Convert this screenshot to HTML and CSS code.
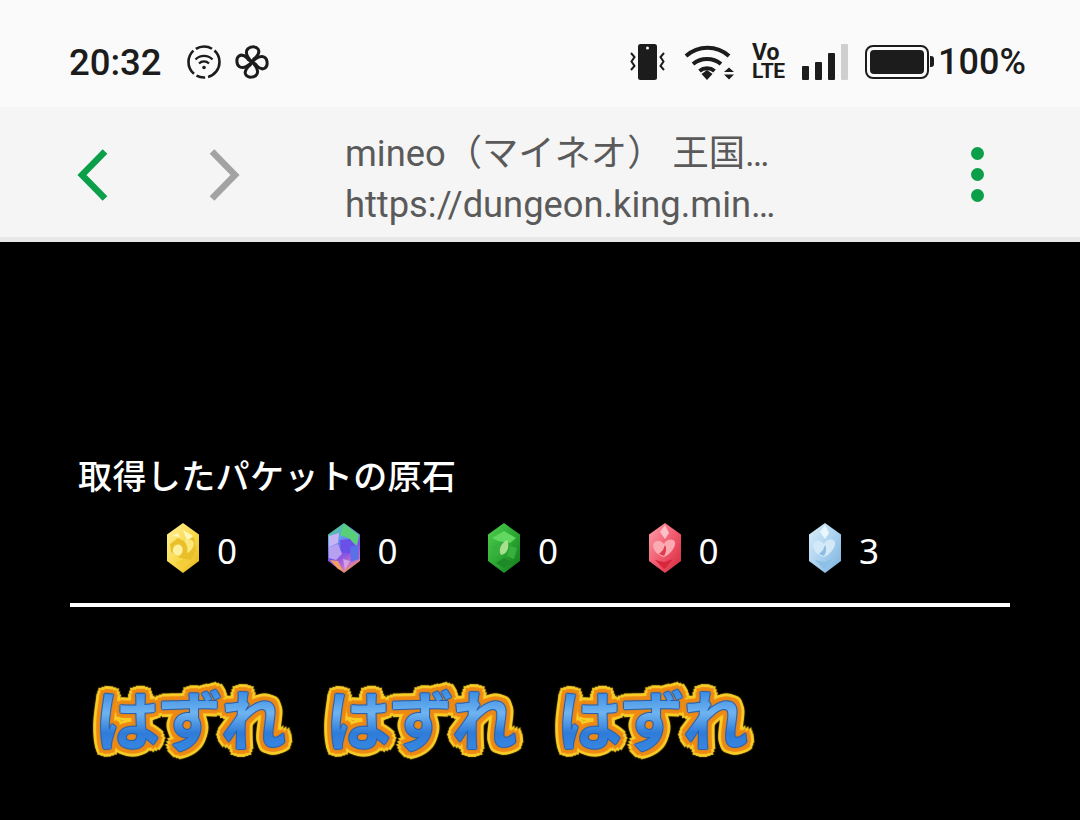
FILE: index.html
```html
<!DOCTYPE html>
<html lang="ja">
<head>
	<meta charset="utf-8">
	<title>mineo</title>
	<link rel="stylesheet" href="styles.css">
</head>
<body>
	<svg class="defs" width="0" height="0">
		<defs>
			<filter id="soft"><feGaussianBlur stdDeviation="0.6"/></filter>
			<linearGradient id="gY" x1="0" y1="0" x2="1" y2="1"><stop offset="0" stop-color="#fff29a"/><stop offset=".55" stop-color="#f8d94a"/><stop offset="1" stop-color="#e8b31a"/></linearGradient>
			<linearGradient id="gG" x1="0" y1="0" x2="1" y2="1"><stop offset="0" stop-color="#4fd04f"/><stop offset=".55" stop-color="#2aa632"/><stop offset="1" stop-color="#11761c"/></linearGradient>
			<linearGradient id="gR" x1="0" y1="0" x2="1" y2="1"><stop offset="0" stop-color="#fba0aa"/><stop offset=".55" stop-color="#f0566a"/><stop offset="1" stop-color="#d4283c"/></linearGradient>
			<linearGradient id="gB" x1="0" y1="0" x2="1" y2="1"><stop offset="0" stop-color="#dcefFb"/><stop offset=".55" stop-color="#a8d0ee"/><stop offset="1" stop-color="#78b0dc"/></linearGradient>
			<linearGradient id="gM" x1="0.2" y1="0" x2="0.6" y2="1"><stop offset="0" stop-color="#4fd67a"/><stop offset=".3" stop-color="#5fa0e8"/><stop offset=".6" stop-color="#7a4fe6"/><stop offset=".85" stop-color="#c46ad0"/><stop offset="1" stop-color="#f0a050"/></linearGradient>
		</defs>
	</svg>

	<div class="status">
		<div class="stLeft">
			<span class="clock">20:32</span>
			<svg class="icoHot" width="36" height="36" viewBox="0 0 36 36" fill="none" stroke="#1c1c1c">
				<circle cx="18" cy="18" r="15.5" stroke-width="2.6" stroke-dasharray="20 3 9 3 26 3 17 3"/>
				<path d="M9.5 15.5a12 12 0 0 1 17 0M13 19.5a7 7 0 0 1 10 0" stroke-width="2.2"/>
				<circle cx="18" cy="23.5" r="1.8" fill="#1c1c1c" stroke="none"/>
			</svg>
			<svg class="icoFan" width="36" height="36" viewBox="0 0 36 36" fill="none" stroke="#1c1c1c" stroke-width="3" stroke-linejoin="round">
				<path d="M18 18C14 14 11 10 13 6C15 2 22 2 24 5C26 8 24 11 22 13C20 14 19 16 18 18Z"/>
				<path d="M18 18C14 14 11 10 13 6C15 2 22 2 24 5C26 8 24 11 22 13C20 14 19 16 18 18Z" transform="rotate(90 18 18)"/>
				<path d="M18 18C14 14 11 10 13 6C15 2 22 2 24 5C26 8 24 11 22 13C20 14 19 16 18 18Z" transform="rotate(180 18 18)"/>
				<path d="M18 18C14 14 11 10 13 6C15 2 22 2 24 5C26 8 24 11 22 13C20 14 19 16 18 18Z" transform="rotate(270 18 18)"/>
			</svg>
		</div>
		<div class="stRight">
			<svg class="icoVib" width="38" height="38" viewBox="0 0 38 38">
				<rect x="9" y="1" width="19" height="36" rx="2.500" fill="#1c1c1c"/>
				<circle cx="18.500" cy="5" r="1.500" fill="#fafafa"/>
				<path d="M2 10l3.500 4-3 4.500 3 4.500-3.500 4M35 10l-3.500 4 3 4.500-3 4.500 3.500 4" fill="none" stroke="#1c1c1c" stroke-width="2"/>
			</svg>
			<svg class="icoWifi" width="50" height="38" viewBox="0 0 50 38">
				<path d="M2 13a32 32 0 0 1 43 0M9 21a22 22 0 0 1 28 0M15.500 28a12 12 0 0 1 15 0" fill="none" stroke="#1c1c1c" stroke-width="4"/>
				<path d="M17.500 31l5.500-4 5.500 4-5.500 6zM40 29l5-4.500 5 4.500zM40 31.500l5 5 5-5z" fill="#1c1c1c"/>
			</svg>
			<div class="volte"><span class="vo">Vo</span><span class="lte">LTE</span></div>
			<div class="signal">
				<i class="b1"></i><i class="b2"></i><i class="b3"></i><i class="b4"></i>
			</div>
			<div class="batt"><div class="battFill"></div></div>
			<span class="pct">100%</span>
		</div>
	</div>

	<div class="bar">
		<svg class="navBack" width="32" height="52" viewBox="0 0 32 52" fill="none" stroke="#0b9f49" stroke-width="6.500"><path d="M28 2.500L5 26l23 23.500"/></svg>
		<svg class="navNext" width="32" height="52" viewBox="0 0 32 52" fill="none" stroke="#a3a3a3" stroke-width="6.500"><path d="M4 2.500L27 26 4 49.500"/></svg>
		<div class="addr">
			<div class="ttl">mineo（マイネオ） 王国…</div>
			<div class="url">https://dungeon.king.min…</div>
		</div>
		<div class="dots"><i></i><i></i><i></i></div>
	</div>

	<div class="main">
		<div class="head">取得したパケットの原石</div>
		<div class="gems">
			<div class="gem">
				<svg width="36" height="52" viewBox="0 0 36 52">
					<polygon points="18,1 34,12.500 34,39 18,51 2,39 2,12.500" fill="url(#gY)"/>
					<g filter="url(#soft)">
						<path d="M5 22l8-6 6 3 10-4 2 14-5 9-11-2-9-6z" fill="#e9bf2c"/>
						<path d="M18 8l10 6-6 5zM7 14l6-3 2 4z" fill="#fff6b8"/>
						<path d="M8 27c1-5 7-6 9-2 2 4-1 9-4 9-3-1-6-3-5-7z" fill="#fff0a0"/>
						<path d="M19 19c3-3 9-2 10 2 0 5-4 9-7 10 1-5 0-8-3-12z" fill="#fbe77a"/>
						<path d="M10 41l8 5 8-6-8-3z" fill="#f4cf3a"/>
					</g>
				</svg>
				<span>0</span>
			</div>
			<div class="gem">
				<svg width="36" height="52" viewBox="0 0 36 52">
					<polygon points="18,1 34,12.500 34,39 18,51 2,39 2,12.500" fill="url(#gM)"/>
					<g filter="url(#soft)">
						<path d="M18 2l15 11-2 11-9-8-8-3z" fill="#58d07a"/>
						<path d="M3 14l10-3-1 10-9 4z" fill="#c8b4f4"/>
						<path d="M3 25l9-3 4 10-6 6-7-2z" fill="#b8a0f0"/>
						<path d="M14 18l10-1 6 8-7 7-8-3z" fill="#6a50e8"/>
						<path d="M24 25l8-2 1 14-8 3z" fill="#5a70e6"/>
						<path d="M4 38l8 1 5 10-5-2z" fill="#f0a060"/>
						<path d="M17 37l7 2-5 9z" fill="#d0a0e8"/>
					</g>
				</svg>
				<span>0</span>
			</div>
			<div class="gem">
				<svg width="36" height="52" viewBox="0 0 36 52">
					<polygon points="18,1 34,12.500 34,39 18,51 2,39 2,12.500" fill="url(#gG)"/>
					<g filter="url(#soft)">
						<path d="M6 16l12-7 12 7-6 5-12-2z" fill="#62d860"/>
						<path d="M7 24l7-3 1 10-7 4zM24 24l7 2-3 11-7-3z" fill="#38b03e"/>
						<path d="M15 33c-3-5 0-12 6-15 3 5 1 14-6 15z" fill="#a8e08e"/>
						<path d="M10 41l8 5 8-6-8-4z" fill="#1e8a28"/>
					</g>
				</svg>
				<span>0</span>
			</div>
			<div class="gem">
				<svg width="36" height="52" viewBox="0 0 36 52">
					<polygon points="18,1 34,12.500 34,39 18,51 2,39 2,12.500" fill="url(#gR)"/>
					<g filter="url(#soft)">
						<path d="M18 3l4 8-4 6-5-7z" fill="#fcc0c6"/>
						<path d="M6 23c2-6 8-5 11-1 2-5 9-6 11-2 1 6-6 13-11 15-5-1-11-6-11-12z" fill="#fbaab2"/>
						<path d="M18 23c2 3 1 8-1 11l-5-2 4-4z" fill="#e03a4e"/>
						<path d="M8 38l9 2 9-3-7 9-2 1z" fill="#d8283e"/>
					</g>
				</svg>
				<span>0</span>
			</div>
			<div class="gem">
				<svg width="36" height="52" viewBox="0 0 36 52">
					<polygon points="18,1 34,12.500 34,39 18,51 2,39 2,12.500" fill="url(#gB)"/>
					<g filter="url(#soft)">
						<path d="M18 3l4 8-4 6-5-7z" fill="#eaf5fc"/>
						<path d="M6 23c2-6 8-5 11-1 2-5 9-6 11-2 1 6-6 13-11 15-5-1-11-6-11-12z" fill="#d4e9f8"/>
						<path d="M18 23c2 3 1 8-1 11l-5-2 4-4z" fill="#8cbce2"/>
						<path d="M8 38l9 2 9-3-7 9-2 1z" fill="#8ec0e6"/>
					</g>
				</svg>
				<span>3</span>
			</div>
		</div>
		<div class="rule"></div>
		<div class="miss">
			<span class="word" data-t="はずれ">はずれ</span>
			<span class="word" data-t="はずれ">はずれ</span>
			<span class="word" data-t="はずれ">はずれ</span>
		</div>
	</div>
</body>
</html>
```

FILE: styles.css
```css
html, body {
	margin: 0;
	padding: 0;
	background: #000;
}
body {
	width: 1080px;
	height: 820px;
	overflow: hidden;
	font-family: Roboto, "Noto Sans CJK JP", sans-serif;
}
.defs {
	position: absolute;
}
.status {
	height: 107px;
	box-sizing: border-box;
	padding: 17px 54px 0 69px;
	background: #fafafa;
	display: flex;
	justify-content: space-between;
	align-items: center;
	color: #1c1c1c;
}
.stLeft, .stRight {
	display: flex;
	align-items: center;
}
.clock {
	font-size: 36.500px;
	font-weight: 500;
	width: 117px;
}
.icoFan {
	margin-left: 12px;
}
.stRight svg {
	flex: none;
}
.icoWifi {
	margin-left: 17px;
}
.volte {
	margin-left: 18px;
	width: 36px;
	display: flex;
	flex-direction: column;
	font-weight: 700;
}
.vo {
	font-size: 23px;
	line-height: 19px;
}
.lte {
	font-size: 21px;
	line-height: 19px;
	letter-spacing: -0.5px;
}
.signal {
	margin-left: 14px;
	display: flex;
	align-items: flex-end;
	gap: 6px;
	height: 36px;
}
.signal i {
	display: block;
	width: 7px;
	background: #1c1c1c;
	border-radius: 1px;
}
.signal .b1 { height: 14px; }
.signal .b2 { height: 18px; }
.signal .b3 { height: 27px; }
.signal .b4 { height: 36px; background: #cfcfcf; }
.batt {
	margin-left: 17px;
	width: 64px;
	height: 34px;
	box-sizing: border-box;
	border: 2.500px solid #1c1c1c;
	border-radius: 8px;
	padding: 3px;
	position: relative;
}
.batt:after {
	content: "";
	position: absolute;
	right: -7px;
	top: 9px;
	width: 4px;
	height: 11px;
	background: #1c1c1c;
	border-radius: 0 3px 3px 0;
}
.battFill {
	height: 100%;
	background: #1c1c1c;
	border-radius: 4px;
}
.pct {
	margin-left: 9px;
	font-size: 36px;
	font-weight: 500;
}
.bar {
	height: 135px;
	box-sizing: border-box;
	padding-top: 5px;
	background: #f5f5f5;
	border-bottom: 5px solid #e8e8e8;
	display: flex;
	align-items: center;
	color: #5a5a5a;
}
.navBack {
	margin-left: 77px;
}
.navNext {
	margin-left: 99px;
}
.addr {
	margin-left: 105px;
	width: 600px;
	padding-top: 8px;
}
.ttl, .url {
	font-size: 36.300px;
	line-height: 51px;
}
.dots {
	display: flex;
	flex-direction: column;
	gap: 8px;
	margin-left: 26px;
}
.dots i {
	display: block;
	width: 13px;
	height: 13px;
	border-radius: 50%;
	background: #0b9f49;
}
.main {
	padding: 209px 70px 0;
	color: #fff;
}
.head {
	padding-left: 8px;
	font-family: "Noto Sans CJK JP", sans-serif;
	font-weight: 500;
	font-size: 34px;
	line-height: 48px;
	letter-spacing: 0.4px;
}
.gems {
	display: flex;
	padding: 19px 0 0 95px;
	height: 60px;
	align-items: center;
}
.gem {
	width: 160.500px;
	display: flex;
	align-items: center;
	gap: 16px;
	font-family: "Noto Sans", sans-serif;
	font-size: 35px;
}
.gem span {
	padding-top: 5px;
}
.rule {
	height: 4px;
	margin-top: 25px;
	background: #fff;
}
.miss {
	display: flex;
	gap: 42px;
	padding: 70px 0 0 25px;
}
.word {
	position: relative;
	font-family: "Noto Sans CJK JP", sans-serif;
	font-weight: 700;
	font-size: 65px;
	line-height: 80px;
	letter-spacing: -2px;
	color: #1f5fb8;
	text-shadow:
		1px 0 1px #1f5fb8,
		-1px 0 1px #1f5fb8,
		0 1px 1px #1f5fb8,
		0 -1px 1px #1f5fb8,
		5px 0 1px #ee8a14,
		-5px 0 1px #ee8a14,
		0 5px 1px #ee8a14,
		0 -5px 1px #ee8a14,
		3px 3px 1px #ee8a14,
		-3px 3px 1px #ee8a14,
		3px -3px 1px #ee8a14,
		-3px -3px 1px #ee8a14,
		4px 4px 1px #ee8a14,
		-4px 4px 1px #ee8a14,
		4px -4px 1px #ee8a14,
		-4px -4px 1px #ee8a14,
		8px 0 1px #f9cf28,
		-8px 0 1px #f9cf28,
		0 8px 1px #f9cf28,
		0 -8px 1px #f9cf28,
		6px 6px 1px #f9cf28,
		-6px 6px 1px #f9cf28,
		6px -6px 1px #f9cf28,
		-6px -6px 1px #f9cf28,
		3px 7px 1px #f9cf28,
		-3px 7px 1px #f9cf28,
		7px -3px 1px #f9cf28,
		-7px -3px 1px #f9cf28,
		7px 3px 1px #f9cf28,
		-7px 3px 1px #f9cf28,
		3px -7px 1px #f9cf28,
		-3px -7px 1px #f9cf28,
		0 0 11px #c8860e;
}
.word:after {
	content: attr(data-t);
	position: absolute;
	left: 0;
	top: 0;
	text-shadow: none;
	color: transparent;
	background: linear-gradient(180deg, #3f8fe4 20%, #6fb4f0 45%, #2f7cd8 70%, #3a8ce4);
	-webkit-background-clip: text;
	background-clip: text;
}
```
